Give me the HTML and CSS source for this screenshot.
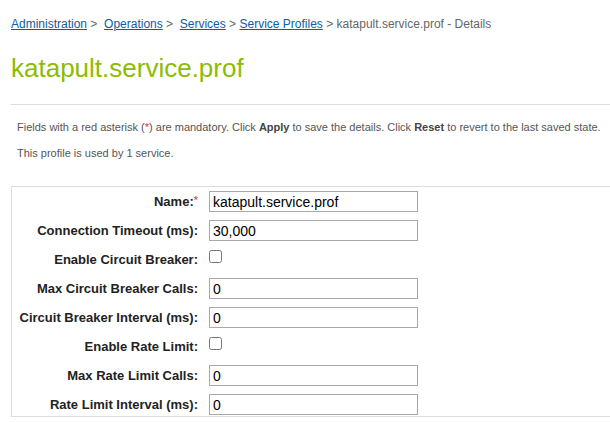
FILE: index.html
```html
<!DOCTYPE html>
<html>
<head>
<meta charset="utf-8">
<link rel="stylesheet" href="styles.css">
</head>
<body>
<div class="page">
  <div class="crumbs"><a href="#">Administration</a> &gt;&nbsp; <a href="#">Operations</a> &gt;&nbsp; <a href="#">Services</a> &gt; <a href="#">Service Profiles</a> &gt; katapult.service.prof - Details</div>
  <h1 class="title">katapult.service.prof</h1>
  <div class="info">
    <p>Fields with a red asterisk (<span class="req">*</span>) are mandatory. Click <b>Apply</b> to save the details. Click <b>Reset</b> to revert to the last saved state.</p>
    <p>This profile is used by 1 service.</p>
  </div>
  <div class="form">
    <label class="lbl">Name:<span class="req">*</span></label>
    <input class="txt" type="text" value="katapult.service.prof">
    <label class="lbl">Connection Timeout (ms):</label>
    <input class="txt" type="text" value="30,000">
    <label class="lbl">Enable Circuit Breaker:</label>
    <input class="chk" type="checkbox">
    <label class="lbl">Max Circuit Breaker Calls:</label>
    <input class="txt" type="text" value="0">
    <label class="lbl">Circuit Breaker Interval (ms):</label>
    <input class="txt" type="text" value="0">
    <label class="lbl">Enable Rate Limit:</label>
    <input class="chk" type="checkbox">
    <label class="lbl">Max Rate Limit Calls:</label>
    <input class="txt" type="text" value="0">
    <label class="lbl">Rate Limit Interval (ms):</label>
    <input class="txt" type="text" value="0">
  </div>
</div>
</body>
</html>
```

FILE: styles.css
```css
html, body {
  margin: 0;
  padding: 0;
  background: #fff;
}
body {
  font-family: "Liberation Sans", Arial, sans-serif;
  color: #333;
}
.page {
  padding-left: 11px;
}
.crumbs {
  padding-top: 17px;
  font-size: 12px;
  line-height: 14px;
  color: #666;
}
.crumbs a {
  color: #0a5ea8;
  text-decoration: underline;
}
.title {
  margin: 0;
  margin-top: 22px;
  font-size: 26px;
  line-height: 30px;
  font-weight: normal;
  color: #8cbc00;
}
.info {
  margin-top: 21px;
  border-top: 1px solid #ddd;
  padding: 15px 0 0 6px;
  font-size: 11px;
  line-height: 14px;
  color: #555;
}
.info p {
  margin: 0 0 12px 0;
}
.info b {
  color: #444;
}
.req {
  color: #e03030;
}
.form {
  margin-top: 26px;
  border-top: 1px solid #ddd;
  border-left: 1px solid #ddd;
  border-bottom: 1px solid #ddd;
  padding: 4px 0 1px 0;
  display: grid;
  grid-template-columns: 186px 1fr;
  grid-auto-rows: 21px;
  column-gap: 11px;
  row-gap: 8px;
  align-items: center;
}
.lbl {
  text-align: right;
  font-size: 13px;
  font-weight: bold;
  color: #222;
}
.lbl .req {
  font-weight: normal;
  vertical-align: top;
  font-size: 11px;
}
.txt {
  box-sizing: border-box;
  width: 209px;
  height: 21px;
  margin: 0;
  padding: 0 3px;
  border: 1px solid #a9a9a9;
  font-family: "Liberation Sans", Arial, sans-serif;
  font-size: 14px;
  color: #000;
  background: #fff;
}
.chk {
  margin: 0;
  width: 13px;
  height: 13px;
  align-self: start;
  margin-top: 1px;
}
```
